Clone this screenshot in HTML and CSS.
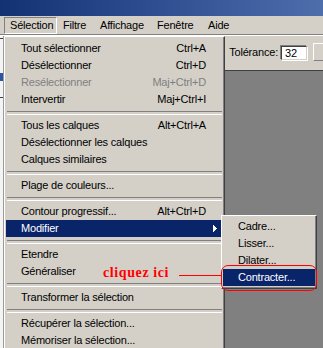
FILE: index.html
```html
<!DOCTYPE html>
<html lang="fr">
<head>
<meta charset="utf-8">
<title>Sélection</title>
<link rel="stylesheet" href="styles.css">
</head>
<body>
<div class="app">
  <div class="titlebar"></div>
  <div class="menubar">
    <span class="mb-item mb-sel pressed">Sélection</span>
    <span class="mb-item mb-filtre">Filtre</span>
    <span class="mb-item mb-aff">Affichage</span>
    <span class="mb-item mb-fen">Fenêtre</span>
    <span class="mb-item mb-aide">Aide</span>
  </div>
  <div class="groove"></div>
  <div class="workspace">
    <div class="left-strip">
      <div class="ls-top"></div>
      <div class="ls-line"></div>
      <div class="ls-gap1"></div>
      <div class="ls-icon"></div>
      <div class="ls-gap2"></div>
      <div class="ls-line"></div>
    </div>
    <div class="mid"></div>
    <div class="right-col">
      <div class="options">
        <span class="bracket"></span>
        <span class="tol-label">Tolérance:</span>
        <span class="tol-input">32</span>
        <span class="opt-next"></span>
      </div>
      <div class="canvas-area"></div>
    </div>
  </div>

  <div class="menu">
    <div class="item"><span>Tout sélectionner</span><span>Ctrl+A</span></div>
    <div class="item"><span>Désélectionner</span><span>Ctrl+D</span></div>
    <div class="item disabled"><span>Resélectionner</span><span>Maj+Ctrl+D</span></div>
    <div class="item"><span>Intervertir</span><span>Maj+Ctrl+I</span></div>
    <div class="sep"></div>
    <div class="item"><span>Tous les calques</span><span>Alt+Ctrl+A</span></div>
    <div class="item"><span>Désélectionner les calques</span></div>
    <div class="item"><span>Calques similaires</span></div>
    <div class="sep"></div>
    <div class="item"><span>Plage de couleurs...</span></div>
    <div class="sep"></div>
    <div class="item"><span>Contour progressif...</span><span>Alt+Ctrl+D</span></div>
    <div class="item active has-sub"><span>Modifier</span>
      <svg class="arrow" width="4" height="7" viewBox="0 0 4 7"><rect x="0" y="0" width="1" height="7" fill="#fff"/><rect x="1" y="1" width="1" height="5" fill="#fff"/><rect x="2" y="2" width="1" height="3" fill="#fff"/><rect x="3" y="3" width="1" height="1" fill="#fff"/></svg>
    </div>
    <div class="sep"></div>
    <div class="item"><span>Etendre</span></div>
    <div class="item"><span>Généraliser</span></div>
    <div class="sep"></div>
    <div class="item"><span>Transformer la sélection</span></div>
    <div class="sep"></div>
    <div class="item"><span>Récupérer la sélection...</span></div>
    <div class="item"><span>Mémoriser la sélection...</span></div>
  </div>

  <div class="submenu">
    <div class="item"><span>Cadre...</span></div>
    <div class="item"><span>Lisser...</span></div>
    <div class="item"><span>Dilater...</span></div>
    <div class="item active"><span>Contracter...</span></div>
  </div>

  <div class="annot-text">cliquez ici</div>
  <div class="annot-line"></div>
  <div class="annot-ring"></div>
</div>
</body>
</html>
```

FILE: styles.css
```css
* { box-sizing: border-box; margin: 0; padding: 0; }
html, body { width: 323px; height: 348px; overflow: hidden; }
body {
  font-family: "Liberation Sans", Arial, sans-serif;
  font-size: 11px;
  letter-spacing: -0.2px;
  color: #000;
  background: #d4d0c8;
}
.app {
  position: relative;
  width: 323px;
  height: 348px;
  overflow: hidden;
  display: flex;
  flex-direction: column;
}
.titlebar {
  flex: none;
  height: 16px;
  background: linear-gradient(90deg, #123274 0%, #2f4f92 50%, #4d6dab 100%);
}
.menubar {
  flex: none;
  height: 18px;
  display: flex;
  padding: 1px 0 0 4px;
  background: #d4d0c8;
}
.mb-item {
  height: 17px;
  line-height: 15px;
  padding-left: 5px;
  border: 1px solid transparent;
  white-space: nowrap;
}
.mb-item.pressed {
  border-color: #808080 #fff #fff #808080;
}
.mb-sel { width: 53px; }
.mb-filtre { width: 37px; }
.mb-aff { width: 57px; }
.mb-fen { width: 51px; }
.mb-aide { width: 36px; }
.groove {
  flex: none;
  height: 2px;
  border-top: 1px solid #808080;
  border-bottom: 1px solid #fff;
}
.workspace {
  flex: 1;
  display: flex;
}
.left-strip {
  width: 4px;
  background: #f4f4f4;
  border-right: 1px solid #9a9a9a;
  display: flex;
  flex-direction: column;
}
.ls-top { height: 2px; }
.ls-line { height: 1px; background: #404040; }
.ls-gap1 { height: 34px; }
.ls-icon { height: 8px; background: #2c54a8; }
.ls-gap2 { height: 16px; }
.mid { width: 221px; background: #d4d0c8; }
.right-col {
  flex: 1;
  display: flex;
  flex-direction: column;
}
.options {
  flex: none;
  height: 34px;
  display: flex;
  align-items: flex-start;
  border-left: 1px solid #fff;
  padding-left: 1px;
  background: #d4d0c8;
  white-space: nowrap;
}
.bracket {
  flex: none;
  width: 7px;
  height: 20px;
  margin-top: 6px;
  border: 1px solid #000;
  border-right: none;
}
.tol-label {
  margin-left: 5px;
  margin-top: 8px;
  line-height: 17px;
}
.tol-input {
  flex: none;
  width: 26px;
  height: 14px;
  margin-left: 3px;
  margin-top: 10px;
  padding-left: 3px;
  line-height: 12px;
  background: #fff;
  border-top: 1px solid #404040;
  border-left: 1px solid #404040;
  border-right: 1px solid #d4d0c8;
  border-bottom: 1px solid #d4d0c8;
  box-shadow: -1px -1px 0 #808080, 1px 1px 0 #fff;
}
.opt-next {
  flex: none;
  width: 10px;
  height: 18px;
  margin-left: 6px;
  margin-top: 7px;
  border-top: 1px solid #fff;
  border-left: 1px solid #fff;
  border-bottom: 1px solid #808080;
}
.canvas-area {
  flex: 1;
  background: #808080;
  border-top: 1px solid #404040;
  border-left: 1px solid #404040;
}

/* dropdown menus */
.menu, .submenu {
  position: absolute;
  background: #d4d0c8;
  border-top: 1px solid #fff;
  border-left: 1px solid #fff;
  border-right: 1px solid #404040;
  border-bottom: 1px solid #404040;
  box-shadow: inset -1px -1px 0 #808080;
}
.menu {
  left: 4px;
  top: 36px;
  width: 221px;
  padding: 3px 1px 2px 1px;
}
.submenu {
  left: 221px;
  top: 215px;
  width: 96px;
  padding: 2px 1px 2px 1px;
}
.item {
  display: flex;
  justify-content: space-between;
  align-items: center;
  height: 17px;
  line-height: 17px;
  padding: 0 17px 0 15px;
  white-space: nowrap;
}
.item.disabled { color: #808080; }
.item.active {
  background: #0a246a;
  color: #fff;
}
.item.has-sub { padding-right: 6px; }
.arrow { display: block; }
.sep {
  height: 9px;
  padding: 3px 1px 0 1px;
}
.sep::before {
  content: "";
  display: block;
  height: 2px;
  border-top: 1px solid #808080;
  border-bottom: 1px solid #fff;
}

/* annotation overlay */
.annot-text {
  position: absolute;
  left: 103px;
  top: 265px;
  font-family: "Liberation Serif", "Times New Roman", serif;
  font-weight: bold;
  font-size: 14px;
  line-height: 16px;
  letter-spacing: 0.6px;
  color: #ff0000;
  white-space: nowrap;
}
.annot-line {
  position: absolute;
  left: 179px;
  top: 275px;
  width: 42px;
  height: 1px;
  background: #ff0000;
}
.annot-ring {
  position: absolute;
  left: 221px;
  top: 265px;
  width: 96px;
  height: 26px;
  border: 1px solid #ff0000;
  border-radius: 7px;
}
```
